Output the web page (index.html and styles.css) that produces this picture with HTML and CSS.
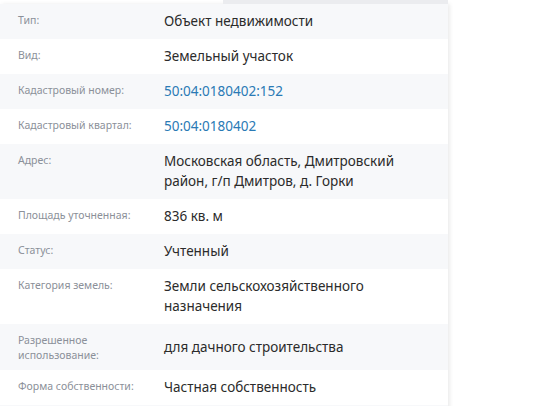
FILE: index.html
```html
<!DOCTYPE html>
<html lang="ru">
<head>
<meta charset="utf-8">
<link rel="stylesheet" href="styles.css">
</head>
<body>
<div class="topbar"><div class="tab"></div></div>
<div class="panel">
  <div class="row"><div class="label">Тип:</div><div class="value">Объект недвижимости</div></div>
  <div class="row"><div class="label">Вид:</div><div class="value">Земельный участок</div></div>
  <div class="row"><div class="label">Кадастровый номер:</div><div class="value"><a class="link" href="#">50:04:0180402:152</a></div></div>
  <div class="row"><div class="label">Кадастровый квартал:</div><div class="value"><a class="link" href="#">50:04:0180402</a></div></div>
  <div class="row"><div class="label">Адрес:</div><div class="value">Московская область, Дмитровский район, г/п Дмитров, д. Горки</div></div>
  <div class="row"><div class="label">Площадь уточненная:</div><div class="value">836 кв. м</div></div>
  <div class="row"><div class="label">Статус:</div><div class="value">Учтенный</div></div>
  <div class="row"><div class="label">Категория земель:</div><div class="value">Земли сельскохозяйственного назначения</div></div>
  <div class="row"><div class="label">Разрешенное<br>использование:</div><div class="value">для дачного строительства</div></div>
  <div class="row"><div class="label">Форма собственности:</div><div class="value">Частная собственность</div></div>
  <div class="row"><div class="label">&nbsp;</div><div class="value">&nbsp;</div></div>
</div>
</body>
</html>
```

FILE: styles.css
```css
html, body {
  margin: 0;
  padding: 0;
  background: #fff;
  overflow: hidden;
}
body {
  width: 552px;
  height: 406px;
  font-family: "Noto Sans", "Open Sans", sans-serif;
}
.topbar {
  height: 4px;
  width: 448px;
  display: flex;
  justify-content: flex-end;
}
.tab {
  width: 225px;
  background: #ebecef;
}
.panel {
  width: 448px;
  box-shadow: 2px 0 4px rgba(0, 0, 0, 0.08);
}
.row {
  display: grid;
  grid-template-columns: 164px 1fr;
  min-height: 35px;
  box-sizing: border-box;
}
.row:nth-child(odd) {
  background: #f7f8fa;
}
.label {
  align-self: start;
  padding: 9px 4px 7px 18px;
  font-size: 10.5px;
  line-height: 15px;
  color: #8b9099;
  white-space: nowrap;
}
.value {
  align-self: center;
  padding: 7px 30px 8px 0;
  font-size: 13.5px;
  line-height: 20px;
  color: #2b2b2b;
}
.link {
  color: #2a7ab5;
  text-decoration: none;
}
```
